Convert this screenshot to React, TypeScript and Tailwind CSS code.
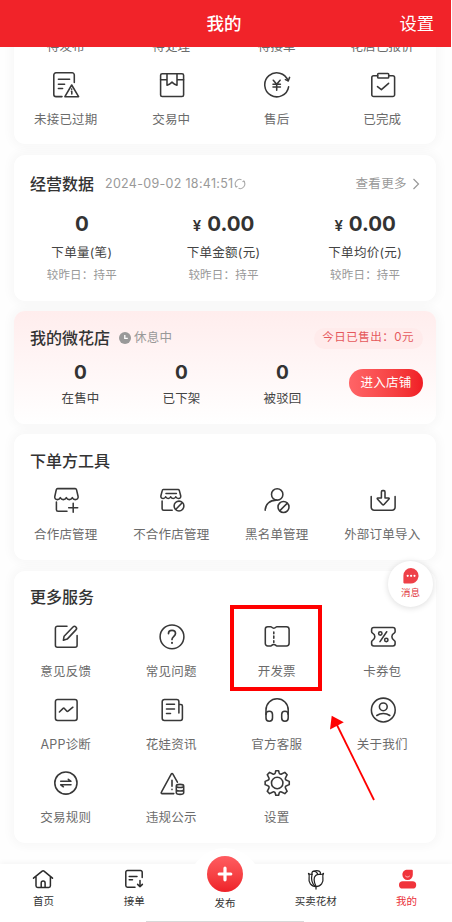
import type { ReactNode } from 'react';

interface MenuItem {
  label: string;
  icon: ReactNode;
}

function Icon({ children }: { children: ReactNode }) {
  return (
    <svg
      viewBox="0 0 28 28"
      className="ml-px h-7 w-7 text-[#383838]"
      fill="none"
      stroke="currentColor"
      strokeWidth="1.55"
      strokeLinecap="round"
      strokeLinejoin="round"
    >
      {children}
    </svg>
  );
}

const orderItems: MenuItem[] = [
  {
    label: '未接已过期',
    icon: (
      <Icon>
        <path d="M22.3 11.5V4a2.2 2.2 0 0 0-2.2-2.2H4A2.2 2.2 0 0 0 1.8 4v19.4A2.2 2.2 0 0 0 4 25.6h6" />
        <path d="M6.4 8.2h11.2M6.4 13.2h6.2M6.4 17.5h4.2" />
        <path d="M19.7 14 26.6 25.7H12.9Z" />
        <path d="M19.7 18v.3M19.4 20.3h.4V23" />
      </Icon>
    ),
  },
  {
    label: '交易中',
    icon: (
      <Icon>
        <rect x="2.6" y="2.7" width="23" height="22.8" rx="1.6" />
        <path d="M2.6 8.8H9M19 8.8h6.6M9 2.7v11.6l2.3-1 2.7-2.2 2.7 2.2 2.3 1V2.7" />
      </Icon>
    ),
  },
  {
    label: '售后',
    icon: (
      <Icon>
        <path d="M25.6 15.8A12 12 0 1 1 25 9.6" />
        <path d="m22.4 8.6 2.8 1.3 1.4-3.5" />
        <path d="m10.3 9.2 3.4 4 3.4-4M13.7 13.2v6M10 13.2h7.4M10 16h7.4" />
      </Icon>
    ),
  },
  {
    label: '已完成',
    icon: (
      <Icon>
        <path d="M8.7 4.7H4.6A1.8 1.8 0 0 0 2.8 6.5v17.2a1.8 1.8 0 0 0 1.8 1.8h19.2a1.8 1.8 0 0 0 1.8-1.8V6.5a1.8 1.8 0 0 0-1.8-1.8h-4.1" />
        <rect x="8.7" y="2.5" width="11" height="4.5" rx=".8" />
        <path d="m8.5 15.6 3.9 3.1 7.2-6.4" />
      </Icon>
    ),
  },
];

const toolItems: MenuItem[] = [
  {
    label: '合作店管理',
    icon: (
      <Icon>
        <path d="M5.6 2.6h17.6c.7 0 1.1.3 1.3 1l1.6 6.9c.4 1.8-1 3.1-2.8 3.1-1.6 0-2.5-.8-3-2-.6 1.2-1.5 2-3 2s-2.4-.8-3-2c-.6 1.2-1.5 2-3 2s-2.4-.8-3-2c-.5 1.2-1.4 2-2.9 2-1.8 0-3-1.3-2.600-3.100l1.500-6.900c.2-.7.6-1 1.300-1Z" />
        <path d="M4.4 16v7.700c0 1 .6 1.600 1.600 1.600h9M21.200 17.200v9M16.700 21.700h9" />
      </Icon>
    ),
  },
  {
    label: '不合作店管理',
    icon: (
      <Icon>
        <path d="M5.3 3.5h14.800c.7 0 1 .3 1.200.9l1.400 5.300c.4 1.600-.7 2.800-2.300 2.800-1.300 0-2.100-.6-2.600-1.700-.5 1.100-1.300 1.700-2.500 1.700s-2-.6-2.600-1.700c-.5 1.100-1.300 1.700-2.500 1.700s-2-.6-2.500-1.700c-.5 1.100-1.200 1.700-2.500 1.700-1.600 0-2.700-1.200-2.300-2.800l1.400-5.300c.1-.6.4-.9 1-.9Z" />
        <path d="M8 7.4h10.400M4.100 15v7.700c0 1 .6 1.600 1.600 1.600h8.500" />
        <circle cx="21" cy="20" r="4.9" />
        <path d="m17.900 23.300 6.300-6.600" />
      </Icon>
    ),
  },
  {
    label: '黑名单管理',
    icon: (
      <Icon>
        <circle cx="14.2" cy="8.4" r="5.7" />
        <path d="M2.2 24.3c0-6 4.600-10.200 11-10.200" />
        <circle cx="20.5" cy="21" r="5.5" />
        <path d="m16.9 24.6 7.200-7.200" />
      </Icon>
    ),
  },
  {
    label: '外部订单导入',
    icon: (
      <Icon>
        <path d="M2.2 10.5v10.800a3 3 0 0 0 3 3h17.900a3 3 0 0 0 3-3V10.500" />
        <path d="M12.4 5.9c0-.9.5-1.300 1.200-1.300h1.200c.7 0 1.200.4 1.200 1.300v6h3.600c.6 0 .8.5.4 1l-5 5.600c-.5.5-1.100.5-1.600 0l-5-5.600c-.4-.5-.2-1 .4-1h3.600Z" />
      </Icon>
    ),
  },
];

const serviceItems: MenuItem[] = [
  {
    label: '意见反馈',
    icon: (
      <Icon>
        <path d="M15 3.2H5.4a2 2 0 0 0-2 2v17.100a2 2 0 0 0 2 2h17.700a2 2 0 0 0 2-2V12.600" />
        <path d="m11.4 17.2.7-4L21 4a2.050 2.050 0 0 1 2.900 2.900l-8.700 9.200Z" />
      </Icon>
    ),
  },
  {
    label: '常见问题',
    icon: (
      <Icon>
        <circle cx="14" cy="13.8" r="11.9" />
        <path d="M10.5 10.6c0-2 1.500-3.300 3.500-3.300s3.500 1.300 3.500 3.200c0 2.700-3.500 2.900-3.500 6" strokeWidth="1.7" />
        <path d="M14 19.8v.2" strokeWidth="2" />
      </Icon>
    ),
  },
  {
    label: '开发票',
    icon: (
      <Icon>
        <path d="M4.7 3.8h3.100c1 0 1 1.400 3 1.400s2-1.400 3-1.400h9.600a2.700 2.700 0 0 1 2.700 2.700v13.700a2.700 2.700 0 0 1-2.700 2.700h-9.600c-1 0-1-1.400-3-1.400s-2 1.400-3 1.400H4.700A2.400 2.400 0 0 1 2.300 20.500V6.200a2.400 2.400 0 0 1 2.400-2.400Z" />
        <path d="M10.8 9v1.800M10.800 13v2.300M10.800 17.700v1.800" />
      </Icon>
    ),
  },
  {
    label: '卡券包',
    icon: (
      <Icon>
        <path d="M4.8 4.5h19.100a2.200 2.200 0 0 1 2.200 2.200v2.100c0 .8-.4 1-1 1.400-3 1.800-3 5.300 0 7.100.6.4 1 .7 1 1.400v2a2.200 2.200 0 0 1-2.200 2.200H4.800a2.200 2.200 0 0 1-2.200-2.200v-2c0-.7.4-1 1-1.400 3-1.800 3-5.300 0-7.100-.6-.4-1-.6-1-1.400V6.700a2.200 2.200 0 0 1 2.200-2.200Z" />
        <path d="M17.7 8.7 11 18.6" />
        <circle cx="11.3" cy="10.4" r="1.7" />
        <circle cx="17.3" cy="16.9" r="1.7" />
      </Icon>
    ),
  },
  {
    label: 'APP诊断',
    icon: (
      <Icon>
        <rect x="3.4" y="3.5" width="21.7" height="20.9" rx="2.2" />
        <path d="m7.4 16 3.700-3.600c.5-.5.9-.5 1.300 0l2.300 2.700c.4.5.9.5 1.400.1l4.800-4" />
      </Icon>
    ),
  },
  {
    label: '花娃资讯',
    icon: (
      <Icon>
        <path d="M22.6 24.4H6.400a2.200 2.200 0 0 1-2.200-2.200V5.700a2.200 2.200 0 0 1 2.200-2.200h12.300A2.200 2.200 0 0 1 20.900 5.700v11.300M20.900 8.400h2c1 0 1.500.5 1.500 1.500v12.400c0 1.300-.9 2.100-1.900 2.100" />
        <path d="M8.5 8.2h8M8.500 13h8M8.500 17.400h4" />
      </Icon>
    ),
  },
  {
    label: '官方客服',
    icon: (
      <Icon>
        <path d="M3 18.5v-4.600a11.100 11.100 0 0 1 22.200 0v4.600" />
        <rect x="3" y="15.3" width="6.5" height="10" rx="3.2" />
        <rect x="18.7" y="15.3" width="6.5" height="10" rx="3.2" />
      </Icon>
    ),
  },
  {
    label: '关于我们',
    icon: (
      <Icon>
        <circle cx="14.3" cy="14" r="11.9" />
        <circle cx="14.3" cy="10.8" r="3.9" />
        <path d="M7.8 19.5c3.700-2.600 9.300-2.600 13 0" />
      </Icon>
    ),
  },
  {
    label: '交易规则',
    icon: (
      <Icon>
        <circle cx="13.9" cy="14" r="11.1" />
        <path d="M8.7 12.300h10.300l-2.700-2M19 15.800H8.700l2.700 2" />
      </Icon>
    ),
  },
  {
    label: '违规公示',
    icon: (
      <Icon>
        <path d="M15.8 24.600H4.200c-1 0-1.300-.7-.8-1.500L13.200 5.200c.5-.9 1.200-.9 1.700 0l4.500 8" />
        <path d="M14 11.300v6M14 20.400v.2" strokeWidth="1.6" />
        <path d="M18.3 17c0-2.200 7.400-2.200 7.400 0v6.700c0 2.200-7.400 2.200-7.400 0ZM18.300 17c0 2 7.400 2 7.400 0M18.300 20.400c0 2 7.400 2 7.400 0" />
      </Icon>
    ),
  },
  {
    label: '设置',
    icon: (
      <Icon>
        <g transform="translate(14.2 14) scale(1.17) translate(-14.2 -12.4)" strokeWidth="1.35">
          <path d="M12.5 3.9 13 1.900h2.400l.5 2c.3.9 1.300 1.200 2 .8l2.800-1.400 2 2-1.400 2.800c-.4.8 0 1.700.9 2l2.300.9v2.800l-2.300.9c-.9.300-1.300 1.200-.9 2l1.400 2.800-2 2-2.800-1.400c-.7-.4-1.700-.1-2 .8l-.5 2H13l-.5-2c-.3-.9-1.300-1.200-2-.8l-2.800 1.400-2-2 1.400-2.800c.4-.8 0-1.700-.9-2l-2.300-.9V11l2.300-.9c.9-.3 1.300-1.200.9-2L5.700 5.300l2-2 2.800 1.400c.7.4 1.700.1 2-.8Z" />
          <circle cx="14.2" cy="12.4" r="4.9" />
        </g>
      </Icon>
    ),
  },
];

const businessStats = [
  { value: '0', label: '下单量(笔)', money: false },
  { value: '0.00', label: '下单金额(元)', money: true },
  { value: '0.00', label: '下单均价(元)', money: true },
];

const shopStats = [
  { value: 0, label: '在售中' },
  { value: 0, label: '已下架' },
  { value: 0, label: '被驳回' },
];

function MenuGrid({ items }: { items: MenuItem[] }) {
  return (
    <div className="mr-px -ml-px grid grid-cols-4 gap-y-[14px]">
      {items.map((item) => (
        <div key={item.label} className="flex flex-col items-center gap-[11px]">
          {item.icon}
          <span className="text-[12.5px] leading-5 tracking-[0.2px] whitespace-nowrap text-[#6b6b6b]">{item.label}</span>
        </div>
      ))}
    </div>
  );
}

function NavIcon({ children }: { children: ReactNode }) {
  return (
    <svg
      viewBox="0 0 22 22"
      className="h-[22px] w-[22px]"
      fill="none"
      stroke="#2b2b2b"
      strokeWidth="1.5"
      strokeLinecap="round"
      strokeLinejoin="round"
    >
      {children}
    </svg>
  );
}

export default function App() {
  return (
    <div className="relative h-[922px] w-[452px] overflow-hidden bg-[#fefefe] font-['Inter','Noto_Sans_CJK_SC',sans-serif] text-[#333]">
      <header className="relative z-10 mr-px grid h-[47px] grid-cols-3 items-center bg-[#f12329] pt-px text-white">
        <h1 className="col-start-2 -ml-[3px] text-center text-[17.5px] font-medium">我的</h1>
        <span className="pr-[17px] text-right text-[17.3px]">设置</span>
      </header>

      <main className="mr-4 ml-[14px] flex flex-col">
        <section className="-mt-[11px] h-[108px] rounded-b-[11px] bg-white shadow-[0_0_10px_4px_rgba(0,0,0,0.028)]">
          <div className="mr-px mb-[14px] -ml-px grid grid-cols-4 pt-px text-center text-[12.5px] leading-5 tracking-[0.2px] text-[#6b6b6b]">
            <span>待发布</span>
            <span>待处理</span>
            <span>待接单</span>
            <span>花店已报价</span>
          </div>
          <MenuGrid items={orderItems} />
        </section>

        <section className="mt-[11px] h-[146px] rounded-[11px] bg-white pt-[17px] shadow-[0_0_10px_4px_rgba(0,0,0,0.028)]">
          <div className="flex h-6 items-center pr-4 pl-4">
            <h2 className="text-base leading-6 font-medium">经营数据</h2>
            <span className="ml-[11px] text-[12.5px] tracking-[0.3px] text-[#999]">2024-09-02 18:41:51</span>
            <svg viewBox="0 0 12 12" className="h-3 w-3" fill="none" stroke="#aaa" strokeWidth="1.1">
              <path d="M2.2 8.8A4.600 4.600 0 0 1 7.500 1.700M9.800 3.200a4.600 4.600 0 0 1-5.300 7.100" />
              <path d="M1.3 7.7l.9 1.300 1.300-.8M10.700 4.300 9.800 3l-1.300.8" />
            </svg>
            <span className="ml-auto text-[12.5px] tracking-[0.4px] text-[#999]">查看更多</span>
            <svg viewBox="0 0 8 12" className="ml-[5px] h-3 w-2" fill="none" stroke="#999" strokeWidth="1.2">
              <path d="m1.5 1 5 5-5 5" />
            </svg>
          </div>
          <div className="-ml-[3px] grid grid-cols-3 text-center">
            {businessStats.map((stat) => (
              <div key={stat.label} className="flex flex-col items-center">
                <div className="mt-[14px] flex h-7 items-baseline text-[20.5px] leading-7 font-bold">
                  {stat.money && <span className="mr-[6px] text-[15px] leading-none font-semibold">¥</span>}
                  <span>{stat.value}</span>
                </div>
                <div className="mt-[5px] text-[12.5px] leading-5 tracking-[0.3px] text-[#444]">{stat.label}</div>
                <div className="mt-[2px] text-[11.5px] leading-5 tracking-[0.2px] text-[#999]">较昨日：持平</div>
              </div>
            ))}
          </div>
        </section>

        <section className="mt-[10px] h-[113px] rounded-[11px] bg-linear-to-b from-[#ffeded] to-white pt-[15px] shadow-[0_0_10px_4px_rgba(0,0,0,0.028)]">
          <div className="flex h-6 items-center pr-[13px] pl-4">
            <h2 className="text-base leading-6 font-medium">我的微花店</h2>
            <svg viewBox="0 0 12 12" className="mr-[3px] ml-[9px] h-3 w-3">
              <circle cx="6" cy="6" r="6" fill="#999" />
              <path d="M5.8 3v3.400h3" fill="none" stroke="#fff" strokeWidth="1.3" />
            </svg>
            <span className="text-[12.5px] tracking-[0.3px] text-[#999]">休息中</span>
            <span className="ml-auto flex h-[21px] items-center rounded-full bg-[#ffebeb] pr-[9px] pl-2 text-[11.5px] tracking-[0.5px] text-[#e5585c]">
              今日已售出：0元
            </span>
          </div>
          <div className="flex pl-4">
            {shopStats.map((stat) => (
              <div key={stat.label} className="mt-[10px] w-[101px] text-center">
                <div className="text-[19px] leading-[26px] font-bold">{stat.value}</div>
                <div className="mt-[3px] text-[12.5px] leading-5 tracking-[0.2px] text-[#444]">{stat.label}</div>
              </div>
            ))}
            <button className="mt-[19px] mr-[13px] ml-auto h-7 w-[74px] rounded-full bg-linear-to-r from-[#ff6467] to-[#f01c24] pt-px text-[12.5px] tracking-[0.3px] text-white">
              进入店铺
            </button>
          </div>
        </section>

        <section className="mt-[10px] h-[126px] rounded-[11px] bg-white pt-[15px] shadow-[0_0_10px_4px_rgba(0,0,0,0.028)]">
          <h2 className="mb-[13px] pl-4 text-base leading-6 font-medium">下单方工具</h2>
          <MenuGrid items={toolItems} />
        </section>

        <section className="mt-[11px] h-[272px] rounded-[11px] bg-white pt-[14px] shadow-[0_0_10px_4px_rgba(0,0,0,0.028)]">
          <h2 className="mb-[14px] pl-4 text-base leading-6 font-medium">更多服务</h2>
          <MenuGrid items={serviceItems} />
        </section>
      </main>

      {/* Floating message button */}
      <div className="absolute top-[561px] left-[388px] flex h-[46px] w-[45px] flex-col items-center rounded-full bg-white pt-[6px] shadow-[0_1px_6px_rgba(0,0,0,0.14)]">
        <svg viewBox="0 0 18 18" className="h-[18px] w-[18px]">
          <path d="M9 1a7.800 7.800 0 1 1-2 15.400H2.200c-.6 0-.8-.3-.8-.8V8.800A7.700 7.700 0 0 1 9 1Z" fill="#ee4048" />
          <circle cx="5.7" cy="8.8" r="1.1" fill="#fff" />
          <circle cx="9.1" cy="8.8" r="1.1" fill="#fff" />
          <circle cx="12.5" cy="8.8" r="1.1" fill="#fff" />
        </svg>
        <span className="text-[9.5px] leading-4 text-[#e0343c]">消息</span>
      </div>

      {/* Highlight and pointer over the invoice entry */}
      <div className="absolute top-[605px] left-[230px] h-[86px] w-[92px] border-4 border-[#f00]" />
      <svg viewBox="0 0 50 90" className="absolute top-[713px] left-[328px] h-[90px] w-[50px]">
        <path d="M8 10 46 87" stroke="#f00" strokeWidth="1.8" />
        <path d="M3.7 2.7 15.8 9.3 2 16.6Z" fill="#f00" />
      </svg>

      <nav className="absolute right-0 bottom-0 left-0 h-[58px]">
        <div className="absolute inset-0 bg-white shadow-[0_-2px_5px_rgba(0,0,0,0.035)]" />
        <div className="absolute top-[-16px] left-[189px] h-[72px] w-[72px] rounded-full bg-white" />
        <div className="relative -ml-[2px] grid h-full w-[454px] grid-cols-5 text-[10.5px] leading-4">
          <div className="flex flex-col items-center pt-1">
            <NavIcon>
              <path d="m1.5 10.200 8.700-7.100c.6-.5 1.200-.5 1.800 0l8.500 7.100M4 9v8.700c0 1.100.6 1.700 1.700 1.700h11c1.100 0 1.700-.6 1.700-1.700V9" />
              <path d="M9.2 19.200v-4.300c0-2.500 3.900-2.500 3.900 0v4.300" />
            </NavIcon>
            <span className="mt-1">首页</span>
          </div>
          <div className="flex flex-col items-center pt-1">
            <NavIcon>
              <path d="M19.2 9.500V4.200c0-1.100-.7-1.700-1.700-1.700h-13c-1 0-1.700.6-1.700 1.700v13.300c0 1.100.7 1.700 1.700 1.700H12" />
              <path d="M6.2 8.500H14M6.200 11.800h3.300M17 12.500v6.200M14.600 16.400l2.400 2.400 2.400-2.400" />
            </NavIcon>
            <span className="mt-1">接单</span>
          </div>
          <div className="flex flex-col items-center">
            <div className="-mt-2 flex h-[36px] w-[36px] items-center justify-center rounded-full bg-linear-to-b from-[#ff5c60] to-[#ee2028]">
              <svg viewBox="0 0 16 16" className="h-4 w-4" stroke="#fff" strokeWidth="3.2" strokeLinecap="round">
                <path d="M8 2.200v11.600M2.200 8h11.600" />
              </svg>
            </div>
            <span className="mt-[4px]">发布</span>
          </div>
          <div className="flex flex-col items-center pt-1">
            <svg
              viewBox="0 0 22 22"
              className="h-[22px] w-[22px]"
              fill="none"
              stroke="#222"
              strokeWidth="1.25"
              strokeLinecap="round"
              strokeLinejoin="round"
            >
              <path d="M7 6.400C5.600 6.400 4.400 6 3.500 5.400c.9 1.500 1 2.800.6 4.700-.8 4.300 1.900 8.500 6.900 8.500s7.700-4.200 6.900-8.500c-.4-1.900-.3-3.200.6-4.700-.9.600-2 1-3.200 1" />
              <path d="M7 6.400C6.700 4.800 7.300 3.600 8.500 3.200c1.900-.6 4.800-.5 6 .2 1 .6 1.200 1.600.8 3M8.500 3.200c1.700.2 3.100.9 3.900 2.200M15.300 6.400c-3.800-.6-6.400 1.700-6.200 5.400.1 2.700.9 4.900 2.100 6.700M7 6.400c-.8 3.500-.5 8.500 3 12M11 18.600V21" />
            </svg>
            <span className="mt-1">买卖花材</span>
          </div>
          <div className="flex flex-col items-center pt-1 text-[#ea3038]">
            <svg viewBox="0 0 22 22" className="h-[22px] w-[22px]">
              <path d="M11.5 1.800h4.400c.6 0 .9.300.9.900v4a5.200 5.200 0 1 1-10.400 0c0-2.900 2.200-4.900 5.100-4.900Z" fill="#f0343b" />
              <path d="M9.6 8.200c1.100 1.100 2.800 1.100 3.900 0" fill="none" stroke="#ffd5d5" strokeWidth=".9" strokeLinecap="round" />
              <rect x="3" y="13.200" width="17.2" height="7.4" rx="3.7" fill="#f0343b" />
            </svg>
            <span className="mt-1">我的</span>
          </div>
        </div>
        <div className="absolute bottom-0 left-[146px] h-[1px] w-[158px] bg-[#d8d8d8]" />
      </nav>
    </div>
  );
}
